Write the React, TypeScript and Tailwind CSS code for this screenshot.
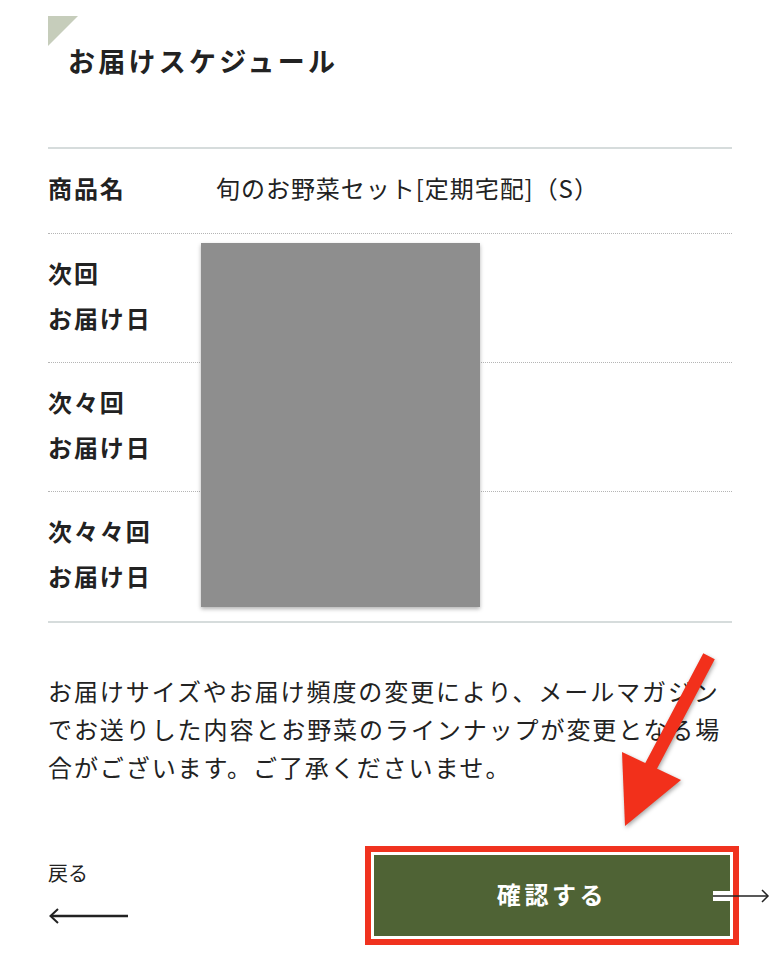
import React from "react";

const rows = [
  { label: ["次回", "お届け日"] },
  { label: ["次々回", "お届け日"] },
  { label: ["次々々回", "お届け日"] },
];

export default function App() {
  const font = { fontFamily: '"Noto Sans CJK JP", "Noto Sans", sans-serif' };
  return (
    <div className="relative min-h-screen w-[780px] bg-white text-[#222]" style={font}>
      <div className="px-12">
        {/* title */}
        <div className="relative pt-[44px] mb-[69px]">
          <div className="absolute left-0 top-[16px] w-0 h-0 border-t-[30px] border-t-[#c6cdbb] border-r-[30px] border-r-transparent" />
          <h1 className="pl-5 text-[27px] leading-[34px] font-bold tracking-[0.12em]">お届けスケジュール</h1>
        </div>

        {/* schedule table */}
        <div className="relative border-t-2 border-b-2 border-[#d6dcdc]">
          <div className="flex items-center h-[85px] pb-[6px] border-b border-dotted border-[#b5b5b5]">
            <div className="w-[168px] text-[24px] font-bold tracking-[0.08em]">商品名</div>
            <div className="text-[24px] tracking-[0.04em]">旬のお野菜セット[定期宅配]（S）</div>
          </div>
          {rows.map((r, i) => (
            <div
              key={i}
              className={`flex h-[129px] pt-[16px] pb-[23px] ${i < rows.length - 1 ? "border-b border-dotted border-[#b5b5b5]" : ""}`}
            >
              <div className="w-[168px] text-[24px] leading-[45px] font-bold tracking-[0.08em]">
                {r.label.map((l) => (
                  <div key={l}>{l}</div>
                ))}
              </div>
            </div>
          ))}
          {/* redaction box */}
          <div className="absolute left-[153px] top-[94px] w-[279px] h-[364px] bg-[#8e8e8e] shadow-[0_2px_4px_rgba(0,0,0,0.3)]" />
        </div>

        {/* note */}
        <p className="mt-[49px] text-[24px] leading-[38px] tracking-[0.08em]">
          お届けサイズやお届け頻度の変更により、メールマガジンでお送りした内容とお野菜のラインナップが変更となる場合がございます。ご了承くださいませ。
        </p>

        {/* footer */}
        <div className="mt-[69px] flex items-start justify-between pb-6">
          <div className="mt-[6px] flex flex-col">
            <span className="text-[20px] leading-[24px]">戻る</span>
            <svg width="82" height="16" viewBox="0 0 82 16" className="mt-[23px]">
              <path d="M3 8 H80" stroke="#222" strokeWidth="2.5" />
              <path d="M10 1 L2.5 8 L10 15" stroke="#222" strokeWidth="2" fill="none" />
            </svg>
          </div>
          <button className="relative w-[356px] h-[81px] mr-[2px] bg-[#4f6335] text-white text-[24px] font-bold tracking-[0.15em] outline-[6px] outline-solid outline-[#f0321f] outline-offset-[3px]">
            <span className="relative -top-[2px]">確認する</span>
            <svg width="58" height="16" viewBox="0 0 58 16" className="absolute left-[339px] top-[33px] overflow-visible">
              <rect x="0" y="3" width="18" height="10" fill="#fff" />
              <path d="M0 8 H55" stroke="#222" strokeWidth="1.5" />
              <path d="M49 2 L55 8 L49 14" stroke="#222" strokeWidth="1.5" fill="none" />
            </svg>
          </button>
        </div>
      </div>

      {/* annotation arrow */}
      <svg className="absolute left-0 top-0 pointer-events-none" width="780" height="961" viewBox="0 0 780 961">
        <g style={{ filter: "drop-shadow(1px 2px 2px rgba(0,0,0,0.35))" }}>
          <path d="M706 662 L650 768" stroke="#f2301b" strokeWidth="13" strokeLinecap="square" />
          <path d="M622 752 L681 780 L625 826 Z" fill="#f2301b" />
        </g>
      </svg>
    </div>
  );
}
